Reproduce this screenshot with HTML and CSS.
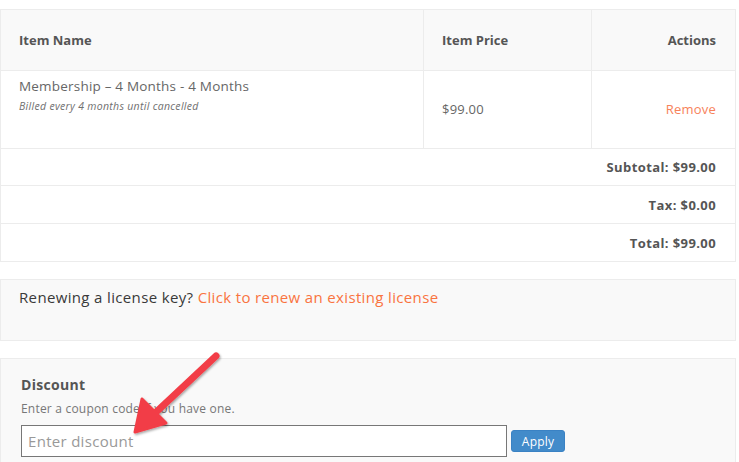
FILE: index.html
```html
<!DOCTYPE html>
<html>
<head>
<meta charset="utf-8">
<link rel="stylesheet" href="styles.css">
</head>
<body>
<div class="page">
  <table class="cart">
    <thead>
      <tr class="head-row">
        <th class="col-name">Item Name</th>
        <th class="col-price">Item Price</th>
        <th class="col-actions">Actions</th>
      </tr>
    </thead>
    <tbody>
      <tr class="item-row">
        <td class="cell-name">
          <div class="item-title">Membership – 4 Months - 4 Months</div>
          <div class="item-terms">Billed every 4 months until cancelled</div>
        </td>
        <td class="cell-price">$99.00</td>
        <td class="cell-actions"><a class="remove" href="#">Remove</a></td>
      </tr>
      <tr class="sum-row sum-first"><td colspan="3">Subtotal: $99.00</td></tr>
      <tr class="sum-row"><td colspan="3">Tax: $0.00</td></tr>
      <tr class="sum-row"><td colspan="3">Total: $99.00</td></tr>
    </tbody>
  </table>

  <div class="renew">
    Renewing a license key? <a class="renew-link" href="#">Click to renew an existing license</a>
  </div>

  <div class="discount">
    <div class="discount-title">Discount</div>
    <div class="discount-help">Enter a coupon code if you have one.</div>
    <div class="discount-form">
      <input class="discount-input" type="text" placeholder="Enter discount">
      <button class="apply-btn" type="button">Apply</button>
    </div>
  </div>

  <svg class="arrow" width="120" height="110" viewBox="0 0 120 110">
    <defs>
      <filter id="sh" x="-20%" y="-20%" width="140%" height="140%">
        <feDropShadow dx="1" dy="1.5" stdDeviation="1.2" flood-color="#000" flood-opacity="0.35"/>
      </filter>
    </defs>
    <g filter="url(#sh)" fill="#f23e46" stroke="#f23e46" stroke-linejoin="round" stroke-linecap="round">
      <line x1="96" y1="11" x2="33" y2="70" stroke-width="7"/>
      <polygon points="15,87 22,54 46,78" stroke-width="3"/>
    </g>
  </svg>
</div>
</body>
</html>
```

FILE: styles.css
```css
html, body {
  margin: 0;
  padding: 0;
  background: #ffffff;
}

.page {
  position: relative;
  width: 736px;
  padding-top: 9px;
  font-family: "Open Sans", "Liberation Sans", sans-serif;
  color: #666666;
}

.cart {
  width: 736px;
  border-collapse: collapse;
  font-size: 13px;
}

.cart th,
.cart td {
  border: 1px solid #ececec;
}

.head-row {
  height: 61px;
  background: #f9f9f9;
}

.head-row th {
  font-weight: 700;
  color: #555555;
  text-align: left;
  padding: 0 19px 0 18px;
}

.col-name { width: 385px; }
.col-price { width: 130px; }
.head-row .col-actions { text-align: right; padding-right: 19px; }

.item-row {
  height: 78px;
}

.cell-name {
  vertical-align: top;
  padding: 6px 19px 0 18px;
}

.item-title {
  font-size: 13.5px;
  line-height: 18px;
  letter-spacing: 0.2px;
  color: #666666;
}

.item-terms {
  font-size: 10.5px;
  font-style: italic;
  line-height: 14px;
  margin-top: 4px;
  letter-spacing: 0.3px;
  color: #6f6f6f;
}

.cell-price {
  padding: 0 19px 2px 18px;
  vertical-align: middle;
  font-size: 13px;
  letter-spacing: 0.2px;
}

.cell-actions {
  padding: 0 19px 2px;
  text-align: right;
  vertical-align: middle;
}

.remove {
  color: #f7825a;
  text-decoration: none;
  font-size: 13px;
  letter-spacing: 0.2px;
}

.sum-row {
  height: 38px;
}

.sum-first {
  height: 37px;
}

.sum-row td {
  text-align: right;
  padding: 0 19px;
  font-weight: 700;
  letter-spacing: 0.4px;
  color: #555555;
}

.renew {
  margin-top: 17px;
  height: 62px;
  box-sizing: border-box;
  padding: 7px 19px 0 18px;
  background: #f9f9f9;
  border: 1px solid #ececec;
  font-size: 15px;
  line-height: 20px;
  letter-spacing: 0.35px;
  color: #3a3a3a;
}

.renew-link {
  color: #f9743f;
  text-decoration: none;
}

.discount {
  margin-top: 17px;
  height: 120px;
  box-sizing: border-box;
  padding: 16px 20px 0;
  background: #f9f9f9;
  border: 1px solid #ececec;
  border-bottom: none;
}

.discount-title {
  font-size: 14px;
  font-weight: 700;
  line-height: 20px;
  letter-spacing: 0.3px;
  color: #555555;
}

.discount-help {
  margin-top: 6px;
  font-size: 12px;
  line-height: 15px;
  letter-spacing: 0.2px;
  color: #777777;
}

.discount-form {
  margin-top: 9px;
  display: flex;
  align-items: flex-start;
  gap: 4px;
}

.discount-input {
  width: 486px;
  height: 32px;
  box-sizing: border-box;
  border: 1px solid #777777;
  padding: 0 6px;
  font-family: "Open Sans", "Liberation Sans", sans-serif;
  font-size: 15px;
  letter-spacing: 0.3px;
  background: #ffffff;
  margin: 0;
}

.discount-input::placeholder {
  color: #999999;
}

.apply-btn {
  width: 54px;
  height: 22px;
  margin: 5px 0 0;
  padding: 0;
  border: 1px solid #3a82c4;
  border-radius: 3px;
  background: #428bca;
  color: #ffffff;
  font-family: "Open Sans", "Liberation Sans", sans-serif;
  font-size: 12px;
  letter-spacing: 0.2px;
}

.arrow {
  position: absolute;
  left: 120px;
  top: 345px;
}
```
